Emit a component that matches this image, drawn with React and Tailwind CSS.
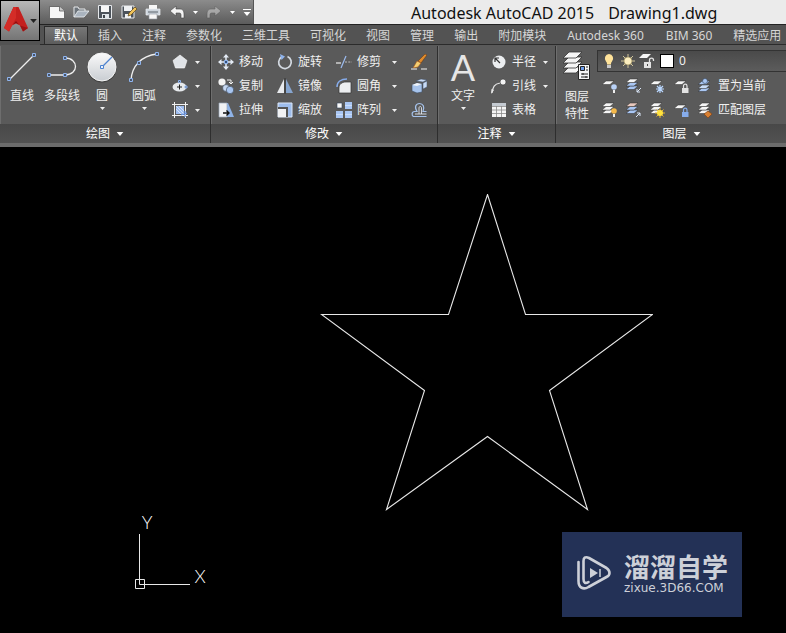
import { clsx } from "clsx";

const handle = { fill: "#4a5568", stroke: "#8fb4ee", strokeWidth: 1 };

function Caret({ className }) {
    return (
        <svg viewBox="0 0 5 3" className={clsx("shrink-0 fill-current", className || "h-[3px] w-[5px]")}>
            <path d="M0 0h5L2.5 3z" />
        </svg>
    );
}

function Icon({ children, className }) {
    return (
        <svg viewBox="0 0 16 16" fill="none" className={clsx("shrink-0", className || "size-4")} aria-hidden="true">
            {children}
        </svg>
    );
}

/* ---------- quick access icons ---------- */

const quickIcons = [
    {
        label: "新建",
        art: (
            <>
                <path d="M.5 2.500h10L15.500 7v7.500H.5z" fill="#f6f6f6" stroke="#4a4a4a" strokeWidth=".7" />
                <path d="M10.500 2.500V7h5" fill="#c9c9c9" stroke="#4a4a4a" strokeWidth=".7" />
            </>
        ),
    },
    {
        label: "打开",
        art: (
            <>
                <path d="M1 13V3h4l1 2h6v2" fill="#6d747b" stroke="#e8eaec" />
                <path d="M1 13 5 7h11l-5 6z" fill="#aab4bf" stroke="#eef1f4" strokeWidth=".8" />
            </>
        ),
    },
    {
        label: "保存",
        art: (
            <>
                <path d="M1.500 1.500h13v13h-13z" fill="#4c535b" stroke="#e6e9ec" />
                <path d="M4 2h8v6H4z" fill="#f7f7f7" />
                <path d="M5 10h7v5H5z" fill="#dfe4e9" />
                <path d="M6 11h2v3H6z" fill="#3c4248" />
            </>
        ),
    },
    {
        label: "另存为",
        art: (
            <>
                <path d="M1 2h12v12H1z" fill="#4c535b" stroke="#e6e9ec" />
                <path d="M3 2h8v5H3zM4 10h6v4H4z" fill="#f0f2f4" />
                <path d="m7 12 1-3 6-6 2 2-6 6z" fill="#f0c35a" stroke="#5b4519" strokeWidth=".7" />
            </>
        ),
    },
    {
        label: "打印",
        art: (
            <>
                <path d="M4 1h8v5H4z" fill="#f7f7f7" />
                <path d="M1 5h14v6H1z" fill="#cdd5dd" stroke="#eef1f4" strokeWidth=".7" />
                <path d="M3 8h10" stroke="#5b636b" />
                <path d="M4 10h8v5H4z" fill="#f7f7f7" stroke="#8d959d" strokeWidth=".6" />
            </>
        ),
    },
];

const undoArt = (
    <path d="M1 7 7 2v3h4c3 0 4 2 4 5v4h-3v-3c0-1.500-.6-2-2-2H7v3z" fill="#f3f3f3" stroke="#444" strokeWidth=".6" />
);

/* ---------- draw panel icons ---------- */

const lineArt = (
    <>
        <path d="M4 28 28 4" stroke="#eee" strokeWidth="1.3" />
        <path d="M1.500 26.500h3v3h-3zM26.500 2.500h3v3h-3z" {...handle} />
    </>
);

const polylineArt = (
    <>
        <path d="M3 24h16c14 0 14-17 0-17" stroke="#eee" strokeWidth="1.3" />
        <path d="M1.500 22.500h3v3h-3zM17.500 22.500h3v3h-3zM17.500 5.500h3v3h-3z" {...handle} />
    </>
);

const circleArt = (
    <>
        <defs>
            <linearGradient id="disc" x1="0" y1="0" x2="0" y2="1">
                <stop offset="0" stopColor="#fafafa" />
                <stop offset="1" stopColor="#c9cdd2" />
            </linearGradient>
        </defs>
        <circle cx="16" cy="17" r="14.500" fill="#424242" />
        <circle cx="16" cy="16" r="14" fill="url(#disc)" stroke="#f4f4f4" />
        <path d="m17 15 9-9" stroke="#4d82cf" strokeWidth="1.3" />
        <path d="M14.500 14.500h3v3h-3z" fill="#e9f1fd" stroke="#4d82cf" />
    </>
);

const arcArt = (
    <>
        <path d="M3 29C4 15 13 5 29 3" stroke="#eee" strokeWidth="1.300" />
        <path d="M1.500 27.500h3v3h-3zM9.500 10.500h3v3h-3zM27.500 1.500h3v3h-3z" {...handle} />
    </>
);

const shapeTools = [
    {
        label: "多边形",
        art: <path d="m8 1 7 5.500L12.500 14h-9L1 6.500z" fill="#e1e4e8" stroke="#fff" strokeWidth=".6" />,
    },
    {
        label: "椭圆",
        art: (
            <>
                <ellipse cx="7.500" cy="9" rx="7" ry="4.500" fill="#e6e9ec" />
                <path d="M5 9h5M7.500 6.500v5" stroke="#222" />
                <path d="M6.500 2.500h2v2h-2zM13 8h2v2h-2z" {...handle} />
            </>
        ),
    },
    {
        label: "图案填充",
        art: (
            <>
                <path d="M4 4h8v8H4z" fill="#9fbdf0" />
                <path d="m4 7 5 5M4 4l8 8M7 4l5 5" stroke="#e4edfc" strokeWidth=".8" />
                <path d="M0 2.500h16M0 13.500h16M2.500 0v16M13.500 0v16" stroke="#f2f2f2" />
                <path d="m9 13 6-2m-2-2v6" stroke="#6a98e8" strokeWidth="1.200" />
            </>
        ),
    },
];

/* ---------- modify panel icons ---------- */

const moveArt = (
    <>
        <path d="m8 0 3 3.500H5zM8 16l3-3.500H5zM0 8l3.500-3v6zM16 8l-3.500-3v6z" fill="#e4ebf5" />
        <path d="M8 3v3M8 10v3M3 8h3M10 8h3" stroke="#e4ebf5" strokeWidth="1.500" />
        <path d="M6.500 6.500h3v3h-3z" fill="#35517a" stroke="#8fb4ee" />
    </>
);

const rotateArt = (
    <>
        <path d="M10.500 2.500A6.300 6.300 0 1 1 4.500 3" stroke="#d4dae2" strokeWidth="1.700" />
        <path d="m3 0 5 2.500L4.500 6z" fill="#8fb4ee" />
    </>
);

const trimArt = (
    <>
        <path d="M0 9h5" stroke="#eee" strokeWidth="1.200" />
        <path d="M5 14 10 2" stroke="#9cbcf0" strokeWidth="1.200" />
        <path d="M9 8h7" stroke="#bbb" strokeDasharray="2 1.300" />
    </>
);

const copyArt = (
    <>
        <circle cx="4" cy="4" r="3.600" fill="#f3f3f3" />
        <circle cx="8" cy="10" r="3.400" fill="#c8d9f2" stroke="#394453" strokeWidth=".6" />
        <circle cx="12" cy="12" r="3.700" fill="#a8c5f0" stroke="#394453" strokeWidth=".6" />
        <path d="M9 2h4v3m-2-1 2 2 2-2" stroke="#f3f3f3" />
    </>
);

const mirrorArt = (
    <>
        <path d="M7 1v14H0z" fill="#e8eaed" />
        <path d="M9 1v14h7z" fill="#86a5cf" />
        <path d="M8 0v16" stroke="#333" />
    </>
);

const filletArt = (
    <>
        <path d="M3 15V10c0-4 3-6 7-6h5v11z" fill="#eceef0" stroke="#333" strokeWidth=".7" />
        <path d="M1 9c0-5 4-8 10-8" stroke="#86aceb" strokeWidth="1.500" />
    </>
);

const stretchArt = (
    <>
        <path d="M8 1h2l6 14H8z" fill="#8fb3e8" />
        <path d="M1 1h8v14H1z" fill="#f1f2f4" stroke="#9ba9ba" strokeWidth=".7" />
        <path d="M5 11h6M8.500 8.500 11 11l-2.500 2.500" stroke="#111" strokeWidth="1.400" />
    </>
);

const scaleArt = (
    <>
        <path d="M1 1h14v14H1z" fill="#9ebdec" stroke="#dce8fa" />
        <path d="M1 5h10v10H1z" fill="#555" />
        <path d="M1 7h8v8H1z" fill="#f1f2f4" />
    </>
);

const arrayArt = (
    <>
        <path d="M1 1h5v5H1z" fill="#fafafa" stroke="#33445d" strokeWidth=".6" />
        <path d="M9 0h7v7H9zM0 9h7v7H0zM9 9h7v7H9z" fill="#a9c6f3" />
        <path d="M9 3.500h7M0 12.500h7M9 12.500h7" stroke="#c9ddfa" />
    </>
);

const eraseArt = (
    <>
        <path d="m7 7 7-7 2 1-6 8z" fill="#e08b2c" stroke="#5c3312" strokeWidth=".5" />
        <path d="m6 7 4 2-3 4-5 1z" fill="#f5cf72" stroke="#a4541b" strokeWidth=".6" />
        <path d="M0 15h6M10 15h6" stroke="#f3f3f3" />
    </>
);

const explodeArt = (
    <>
        <path d="m1 7 5-2 5 1v8l-5 1-5-2z" fill="#a6c3ec" stroke="#3c4d65" strokeWidth=".6" />
        <path d="m1 7 5 1 5-2-5-1z" fill="#eef3fa" />
        <path d="m5 3 5-2 6 1-4 2zM12 5l4-2v6l-4 2z" fill="#c8dbf6" stroke="#3c4d65" strokeWidth=".5" />
    </>
);

const offsetArt = (
    <>
        <path d="M15.500 14.500H2.500c-2-1-2-5 1-5H6C3 5 5 1.500 8.500 1.500S14 5 12 9.500h3.500" stroke="#a6c3ec" strokeWidth="1.200" />
        <path d="M15.500 12H4M8 12V6c0-2 2.500-2 2.500 0v6" stroke="#eef3fa" strokeWidth=".8" />
    </>
);

const modifyRows = [
    [
        { label: "移动", art: moveArt },
        { label: "旋转", art: rotateArt },
        { label: "修剪", art: trimArt, menu: true },
        { label: "删除", art: eraseArt, iconOnly: true },
    ],
    [
        { label: "复制", art: copyArt },
        { label: "镜像", art: mirrorArt },
        { label: "圆角", art: filletArt, menu: true },
        { label: "分解", art: explodeArt, iconOnly: true },
    ],
    [
        { label: "拉伸", art: stretchArt },
        { label: "缩放", art: scaleArt },
        { label: "阵列", art: arrayArt, menu: true },
        { label: "偏移", art: offsetArt, iconOnly: true },
    ],
];

/* ---------- annotation panel icons ---------- */

const noteTools = [
    {
        label: "半径",
        menu: true,
        art: (
            <>
                <circle cx="8" cy="8" r="6.500" fill="#eceef0" />
                <path d="M9 9 4.500 4.500M4 8V4h4" stroke="#333" strokeWidth="1.200" />
            </>
        ),
    },
    {
        label: "引线",
        menu: true,
        art: (
            <>
                <path d="M1 15C2 9 3 6 9 5" stroke="#e6e6e6" strokeWidth="1.200" />
                <path d="m0 16 .5-5 2.500 1z" fill="#e6e6e6" />
                <circle cx="12" cy="4" r="3" fill="#f3f3f3" stroke="#333" strokeWidth=".6" />
            </>
        ),
    },
    {
        label: "表格",
        art: (
            <>
                <path d="M1 1h14v14H1z" fill="#f5f5f5" />
                <path d="M1 1h14v3H1z" fill="#c4cad1" />
                <path d="M1 4.500h14M1 8h14M1 11.500h14M5.500 4v11M10.500 4v11" stroke="#8a8a8a" strokeWidth=".8" />
            </>
        ),
    },
];

/* ---------- layer panel icons ---------- */

const sheet = (y, fill) => (
    <path key={y} d={`M5 ${y}h8l-4 3.500H1z`} fill={fill} stroke="#2f2f2f" strokeWidth=".5" />
);

const singleSheet = sheet(3, "#f5f5f5");

const stack = (low = "#f5f5f5", high = "#f5f5f5") => (
    <>
        {sheet(8, low)}
        {sheet(4.5, low)}
        {sheet(1, high)}
    </>
);

const lockArt = (fill) => (
    <>
        <path d="M10.500 10V8c0-2.500 3.500-2.500 3.500 0v2" stroke={fill} strokeWidth="1.200" />
        <path d="M9 10h6.500v5H9z" fill={fill} />
    </>
);

const layerRows = [
    [
        { label: "关", art: <>{singleSheet}<circle cx="13" cy="9" r="2.800" fill="#b9d2f7" /><path d="M12 12h2v3h-2z" fill="#eee" /></> },
        { label: "隔离", art: <>{stack("#a9c6f3")}<path d="m16 10-4 4m0-3v3h3" stroke="#dce8fa" /></> },
        { label: "冻结", art: <>{singleSheet}<path d="M11 7v8M7 11h8M8 8l6 6M14 8l-6 6" stroke="#b9d7ff" strokeWidth="1.200" /></> },
        { label: "锁定", art: <>{singleSheet}{lockArt("#e3e3e3")}</> },
        { label: "置为当前", text: true, art: <>{sheet(10, "#a9c6f3")}{sheet(7, "#c8dbf6")}{sheet(3, "#a9c6f3")}<circle cx="8" cy="3" r="2.500" fill="#a9c6f3" stroke="#33445d" strokeWidth=".6" /></> },
    ],
    [
        { label: "打开所有图层", art: <>{stack()}<circle cx="13" cy="9" r="2.800" fill="#f3b84b" /><path d="M12 12h2v3h-2z" fill="#eee" /></> },
        { label: "取消隔离", art: <>{stack("#a9c6f3", "#e8c8bd")}<path d="m11 15 4-4m-3 0h3v3" stroke="#dce8fa" /></> },
        { label: "解冻", art: <>{stack()}<path d="M11 6v10M6 11h10M7.500 7.500l7 7M14.500 7.500l-7 7" stroke="#e5b62e" /><circle cx="11" cy="11" r="3" fill="#ffe23d" /></> },
        { label: "解锁", art: <>{singleSheet}{lockArt("#86aceb")}</> },
        { label: "匹配图层", text: true, art: <>{stack()}<path d="m7 12 4-3 4 3-4 4z" fill="#d98032" stroke="#7a3d10" strokeWidth=".6" /></> },
    ],
];

const layerPropsArt = (
    <>
        {[15, 10, 5, 0].map((y) => (
            <path key={y} d={`M7 ${y + 1}h13l-6 6H1z`} fill="#f5f5f5" stroke="#333" strokeWidth=".8" />
        ))}
        <path d="M16.500 13.500h11v15h-11z" fill="#f5f5f5" stroke="#222" />
        <path d="M18.500 15.500h4v4h-4z" fill="#6b9bea" stroke="#222" />
        <path d="M24 16h2M24 19h2M19 23h7M19 26h7M21 22v2M24 25v2" stroke="#222" />
    </>
);

/* ---------- ribbon pieces ---------- */

const tabs = [
    { name: "默认" },
    { name: "插入" },
    { name: "注释" },
    { name: "参数化" },
    { name: "三维工具" },
    { name: "可视化" },
    { name: "视图" },
    { name: "管理" },
    { name: "输出" },
    { name: "附加模块" },
    { name: "Autodesk 360", wide: true },
    { name: "BIM 360", wide: true },
    { name: "精选应用" },
];

function Panel({ title, className, children }) {
    return (
        <section className={clsx("flex flex-col border-r border-[#2e2e2e] shadow-[inset_1px_0_0_#6e6e6e]", className)}>
            <div className="flex h-[78px] pt-1">{children}</div>
            <button className="flex h-[19px] items-center justify-center gap-1.5 bg-gradient-to-b from-[#484848] to-[#525252] pt-px text-white">
                {title}
                <Caret className="h-1 w-2" />
            </button>
        </section>
    );
}

function BigTool({ label, menu, className, art }) {
    return (
        <button className={clsx("flex shrink-0 flex-col items-center pt-px", className)}>
            {art}
            <span className="mt-[5px] leading-4">{label}</span>
            {menu && <Caret className="mt-[3px] h-[3px] w-[5px]" />}
        </button>
    );
}

function BigIcon({ children }) {
    return (
        <svg viewBox="0 0 32 32" fill="none" className="size-8 overflow-visible" aria-hidden="true">
            {children}
        </svg>
    );
}

function SmallTool({ tool, caretClass }) {
    return (
        <button aria-label={tool.label} className="flex h-6 items-center gap-[5px]">
            <Icon>{tool.art}</Icon>
            {!tool.iconOnly && <span>{tool.label}</span>}
            {tool.menu && <Caret className={clsx("h-[3px] w-[5px]", caretClass)} />}
        </button>
    );
}

function QuickAccess() {
    return (
        <div className="flex w-[214px] shrink-0 items-center gap-2 border-r border-[#555] bg-gradient-to-b from-[#8c8c8c] to-[#5c5c5c] pl-[9px] text-white">
            {quickIcons.map((q) => (
                <button key={q.label} aria-label={q.label}>
                    <Icon>{q.art}</Icon>
                </button>
            ))}
            <button aria-label="放弃" className="flex items-center gap-2">
                <Icon>{undoArt}</Icon>
                <Caret />
            </button>
            <button aria-label="重做" className="flex items-center gap-2">
                <Icon className="size-4 -scale-x-100 opacity-40">{undoArt}</Icon>
                <Caret />
            </button>
            <button aria-label="自定义快速访问工具栏" className="flex flex-col items-center gap-0.5">
                <span className="h-px w-2 bg-white" />
                <Caret className="h-1 w-2" />
            </button>
        </div>
    );
}

function TitleBar() {
    return (
        <div className="flex bg-[#535353]">
            <button
                aria-label="应用程序菜单"
                className="flex h-[41px] w-10 shrink-0 items-center border border-black bg-gradient-to-b from-[#b8b8b8] to-[#757575] pb-1 pl-[3px] text-[#222]"
            >
                <svg viewBox="0 0 24 26" className="h-[26px] w-6" aria-hidden="true">
                    <path d="M9.500 1h5L24 22l-5 3.500-3-6-4-2-4 2-3 6L0 22z" fill="#c4201e" />
                    <path d="M9.500 1H12v11l-4 7.500-3 6L0 22z" fill="#d42c27" />
                    <path d="m9 18.500 3-3.500 3 3.500-3-1.500z" fill="#8e1010" />
                    <path d="m16 19.500 8 2.500-5 3.500z" fill="#9c1414" />
                </svg>
                <Caret className="mt-1 ml-0.5 h-1 w-[7px]" />
            </button>
            <div className="min-w-0 flex-1">
                <div className="flex h-[25px] border-b border-[#222] bg-[#ebebeb]">
                    <QuickAccess />
                    <h1 className="flex flex-1 items-center gap-3.5 overflow-hidden pt-px pl-[157px] text-base whitespace-nowrap text-[#111]">
                        <span>Autodesk AutoCAD 2015</span>
                        <span>Drawing1.dwg</span>
                    </h1>
                </div>
                <nav className="flex h-5 items-end overflow-hidden border-b border-[#2b2b2b] pl-1">
                    {tabs.map((tab, i) => (
                        <a
                            key={tab.name}
                            href={`#tab-${i}`}
                            className={clsx(
                                "flex h-[18px] shrink-0 items-center border pt-px whitespace-nowrap",
                                tab.wide ? "px-2.5" : "px-[9px]",
                                i === 0
                                    ? "border-b-0 border-[#2b2b2b] bg-gradient-to-b from-[#777] to-[#5c5c5c] text-white"
                                    : "border-transparent text-[#d6d6d6]"
                            )}
                        >
                            {tab.name}
                        </a>
                    ))}
                </nav>
            </div>
        </div>
    );
}

function Ribbon() {
    return (
        <div className="flex overflow-hidden border-b-4 border-[#6c6c6c] bg-[#5a5a5a] pt-px text-[#f0f0f0]">
            <Panel title="绘图" className="w-[211px] shrink-0">
                <div className="flex pl-1">
                    <BigTool label="直线" className="w-9" art={<BigIcon>{lineArt}</BigIcon>} />
                    <BigTool label="多段线" className="w-11" art={<BigIcon>{polylineArt}</BigIcon>} />
                    <BigTool label="圆" menu className="w-9" art={<BigIcon>{circleArt}</BigIcon>} />
                    <BigTool label="圆弧" menu className="w-12" art={<BigIcon>{arcArt}</BigIcon>} />
                </div>
                <div className="ml-1">
                    {shapeTools.map((s) => (
                        <button key={s.label} aria-label={s.label} className="flex h-6 items-center gap-[7px]">
                            <Icon>{s.art}</Icon>
                            <Caret />
                        </button>
                    ))}
                </div>
            </Panel>

            <Panel title="修改" className="w-[227px] shrink-0">
                <div className="pl-[7px]">
                    {modifyRows.map((row, i) => (
                        <div key={i} className="grid grid-cols-[59px_59px_75px_16px]">
                            {row.map((tool) => (
                                <SmallTool key={tool.label} tool={tool} caretClass="ml-1.5" />
                            ))}
                        </div>
                    ))}
                </div>
            </Panel>

            <Panel title="注释" className="w-[118px] shrink-0">
                <BigTool
                    label="文字"
                    menu
                    className="ml-[5px] w-10"
                    art={
                        <BigIcon>
                            <text x="16" y="30" textAnchor="middle" fontSize="36" fill="#e6e6e6" fontFamily="Lato, sans-serif">
                                A
                            </text>
                        </BigIcon>
                    }
                />
                <div className="ml-2">
                    {noteTools.map((tool) => (
                        <SmallTool key={tool.label} tool={tool} caretClass="ml-0.5" />
                    ))}
                </div>
            </Panel>

            <Panel title="图层" className="min-w-[252px] flex-1">
                <button className="ml-[5px] flex w-8 shrink-0 flex-col items-center pt-px">
                    <svg viewBox="0 0 30 32" fill="none" className="h-8 w-[30px]" aria-hidden="true">
                        {layerPropsArt}
                    </svg>
                    <span className="mt-[5px] w-6 leading-[17px]">图层特性</span>
                </button>
                <div className="ml-1 min-w-0 flex-1">
                    <div className="flex h-[22px] items-center gap-[3px] border border-r-0 border-[#333] bg-gradient-to-b from-[#4a4a4a] to-[#5c5c5c] pl-[3px]">
                        <Icon>
                            <path d="M8 1a4.500 4.500 0 0 0-3 7.500c1 1 1 2 1 3h4c0-1 0-2 1-3A4.500 4.500 0 0 0 8 1z" fill="#ffe39a" />
                            <path d="M6 12h4v3H6z" fill="#c9c9c9" />
                        </Icon>
                        <Icon>
                            <path d="M8 1v14M1 8h14M3 3l10 10M13 3 3 13" stroke="#cfc39a" />
                            <circle cx="8" cy="8" r="4" fill="#fbeec0" stroke="#8a7c4c" strokeWidth=".6" />
                        </Icon>
                        <Icon>
                            <path d="M4 1h8L8 5H0z" fill="#f5f5f5" />
                            <path d="M5 9h7v6H5z" fill="#e3e3e3" />
                            <path d="M10.500 9V7c0-2.500 4-2.500 4 0v1" stroke="#e3e3e3" strokeWidth="1.300" />
                            <path d="M8 11h1v2H8z" fill="#444" />
                        </Icon>
                        <span className="ml-0.5 size-3.5 shrink-0 border border-black bg-white" />
                        <select aria-label="图层" className="min-w-0 flex-1 appearance-none bg-transparent pl-0.5 text-xs outline-none">
                            <option>0</option>
                        </select>
                    </div>
                    <div className="pt-0.5">
                        {layerRows.map((row, i) => (
                            <div key={i} className="flex h-6 items-center gap-2 pl-1">
                                {row.map((tool) => (
                                    <button key={tool.label} aria-label={tool.label} className="flex shrink-0 items-center gap-[5px]">
                                        <Icon>{tool.art}</Icon>
                                        {tool.text && <span>{tool.label}</span>}
                                    </button>
                                ))}
                            </div>
                        ))}
                    </div>
                </div>
            </Panel>
        </div>
    );
}

/* ---------- drawing area ---------- */

function Watermark() {
    return (
        <div className="absolute right-11 bottom-4 flex h-[85px] w-[180px] items-center gap-3 bg-[#233156] pb-1 pl-3.5 text-[#cdd0d8]">
            <svg viewBox="0 0 36 36" fill="none" stroke="currentColor" className="size-9 shrink-0" aria-hidden="true">
                <path
                    d="M2.500 7v19c0 7 5 9 10 6l18-10c4-2 4-6 0-9L13 3C9 1 7.500 3 7.500 6v18c0 4 2 5 5 3"
                    strokeWidth="2.600"
                    strokeLinejoin="round"
                    strokeLinecap="round"
                />
                <path d="m14 13 8 5-8 5z" fill="currentColor" stroke="none" />
                <path d="M24 14v8" strokeWidth="1.500" />
            </svg>
            <div>
                <p className="text-[26px] leading-[30px] font-bold whitespace-nowrap">溜溜自学</p>
                <p className="font-[family-name:'DejaVu_Sans',sans-serif] text-xs leading-3 whitespace-nowrap">zixue.3D66.COM</p>
            </div>
        </div>
    );
}

function Canvas() {
    return (
        <main className="relative min-h-[486px] flex-1 overflow-hidden bg-black">
            <svg viewBox="0 0 333 318" fill="none" className="absolute top-[47px] left-80 h-[318px] w-[333px]" aria-label="五角星">
                <path
                    d="M167.500 .5 205.500 120.500H332.500L229.500 196.500 267.500 315.500 167.500 242.500 66.500 315.500 104.500 196.500 1.500 120.500H128.500z"
                    stroke="#e8e8e8"
                    strokeWidth="1.100"
                />
            </svg>
            <svg viewBox="0 0 80 80" fill="none" className="absolute bottom-10 left-[132px] size-20 overflow-visible" aria-label="UCS">
                <path d="M7.500 21v50.500H58" stroke="#e8e8e8" />
                <path d="M3.500 66.500h9v9h-9z" stroke="#e8e8e8" />
                <text x="15" y="16" textAnchor="middle" fontSize="18" fontWeight="300" fill="#fff" fontFamily="Lato, sans-serif">Y</text>
                <text x="68" y="70" textAnchor="middle" fontSize="18" fontWeight="300" fill="#fff" fontFamily="Lato, sans-serif">X</text>
            </svg>
            <Watermark />
        </main>
    );
}

export default function App() {
    return (
        <div className="flex min-h-screen flex-col bg-black font-[family-name:'Noto_Sans','Noto_Sans_CJK_SC',sans-serif] text-xs">
            <header>
                <TitleBar />
                <Ribbon />
            </header>
            <Canvas />
        </div>
    );
}
